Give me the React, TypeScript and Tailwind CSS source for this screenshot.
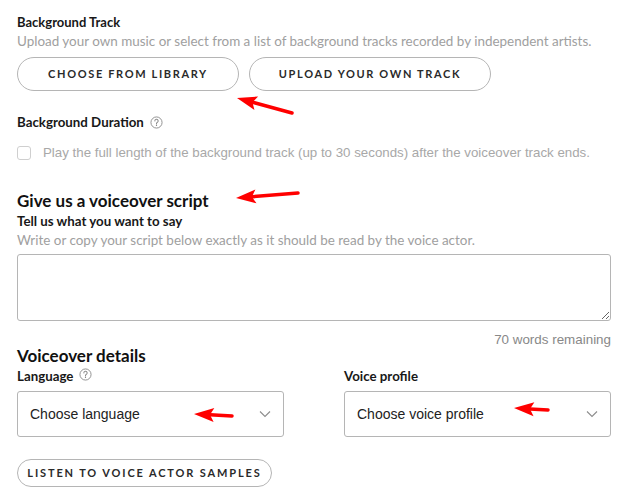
import React from "react";

const Help = ({ className = "" }: { className?: string }) => (
  <svg width="13" height="13" viewBox="0 0 14 14" className={className}>
    <circle cx="7" cy="7" r="6" fill="none" stroke="#8a8a8a" strokeWidth="1" />
    <path d="M5.2 5.4a1.8 1.8 0 1 1 2.5 1.6c-.5.3-.7.6-.7 1.2v.3" fill="none" stroke="#8a8a8a" strokeWidth="1.1" strokeLinecap="round" />
    <circle cx="7" cy="10.2" r="0.7" fill="#8a8a8a" />
  </svg>
);

const Chevron = () => (
  <svg width="12" height="8" viewBox="0 0 12 8">
    <path d="M1 1.5l5 5 5-5" fill="none" stroke="#8c8c8c" strokeWidth="1.1" />
  </svg>
);

const Arrow = ({ x1, y1, x2, y2 }: { x1: number; y1: number; x2: number; y2: number }) => {
  const dx = x2 - x1;
  const dy = y2 - y1;
  const len = Math.sqrt(dx * dx + dy * dy);
  const ux = dx / len;
  const uy = dy / len;
  const hl = 20;
  const hw = 7;
  const bx = x2 - ux * hl;
  const by = y2 - uy * hl;
  const px = -uy;
  const py = ux;
  return (
    <g>
      <line x1={x1} y1={y1} x2={bx + ux * 4} y2={by + uy * 4} stroke="#f00" strokeWidth="3.5" strokeLinecap="round" />
      <polygon
        points={`${x2},${y2} ${bx + px * hw},${by + py * hw} ${bx + ux * 4},${by + uy * 4} ${bx - px * hw},${by - py * hw}`}
        fill="#f00"
      />
    </g>
  );
};

const arial = { fontFamily: '"Liberation Sans", Arial, sans-serif' };

export default function App() {
  const sans = { fontFamily: '"Lato", "Noto Sans", sans-serif' };
  return (
    <div className="relative w-[636px] h-[495px] bg-white overflow-hidden" style={sans}>
      <div className="pl-[17px] pr-[25px] pt-[14px]">
        <div className="text-[13px] leading-[16px] font-bold text-[#181818]">Background Track</div>
        <div className="mt-[3px] text-[13.45px] leading-[16px] text-[#a0a0a0]">
          Upload your own music or select from a list of background tracks recorded by independent artists.
        </div>
        <div className="mt-[8px] flex gap-[10px]">
          <button className="w-[222px] h-[34px] rounded-full border border-[#b5b5b5] text-[11px] font-bold tracking-[0.15em] text-[#2a2a2a]">
            CHOOSE FROM LIBRARY
          </button>
          <button className="w-[242px] h-[34px] rounded-full border border-[#b5b5b5] text-[11px] font-bold tracking-[0.15em] text-[#2a2a2a]">
            UPLOAD YOUR OWN TRACK
          </button>
        </div>
        <div className="mt-[23px] flex items-center gap-[6px]">
          <span className="text-[13.3px] leading-[16px] font-bold text-[#181818]">Background Duration</span>
          <Help />
        </div>
        <div className="mt-[15px] flex items-center">
          <span className="w-[14px] h-[14px] rounded-[3px] border border-[#cfcfcf] bg-white" />
          <span className="ml-[12px] text-[13.3px] leading-[16px] text-[#a8a8a8]" style={arial}>
            Play the full length of the background track (up to 30 seconds) after the voiceover track ends.
          </span>
        </div>
        <div className="mt-[30px] text-[17px] leading-[20px] font-bold text-[#111]">Give us a voiceover script</div>
        <div className="mt-[2px] text-[13.3px] leading-[16px] font-bold text-[#181818]">Tell us what you want to say</div>
        <div className="mt-[3px] text-[13.45px] leading-[16px] text-[#a0a0a0]">
          Write or copy your script below exactly as it should be read by the voice actor.
        </div>
        <textarea className="mt-[6px] block w-[594px] h-[67px] rounded-[3px] border border-[#b5b5b5] resize-y" />
        <div className="mt-[11px] text-right text-[13.4px] leading-[16px] text-[#888]" style={arial}>
          70 words remaining
        </div>
        <div className="-mt-[2px] text-[17px] leading-[20px] font-bold text-[#111]">Voiceover details</div>
        <div className="mt-[2px] grid grid-cols-2 gap-[60px]">
          <div>
            <div className="flex items-center gap-[6px]">
              <span className="text-[13.3px] leading-[16px] font-bold text-[#181818]">Language</span>
              <Help className="-mt-[4px]" />
            </div>
            <div className="mt-[7px] h-[46px] rounded-[3px] border border-[#b5b5b5] flex items-center justify-between pl-[12px] pr-[12px]">
              <span className="text-[14px] text-[#222]" style={arial}>
                Choose language
              </span>
              <Chevron />
            </div>
          </div>
          <div>
            <div className="flex items-center">
              <span className="text-[13.3px] leading-[16px] font-bold text-[#181818]">Voice profile</span>
            </div>
            <div className="mt-[7px] h-[46px] rounded-[3px] border border-[#b5b5b5] flex items-center justify-between pl-[12px] pr-[12px]">
              <span className="text-[14px] text-[#222]" style={arial}>
                Choose voice profile
              </span>
              <Chevron />
            </div>
          </div>
        </div>
        <button className="mt-[22px] w-[255px] h-[28px] rounded-full border border-[#b5b5b5] text-[11px] font-bold tracking-[0.17em] text-[#2a2a2a]">
          LISTEN TO VOICE ACTOR SAMPLES
        </button>
      </div>
      <svg className="absolute inset-0 pointer-events-none" width="636" height="495">
        <Arrow x1={292} y1={113} x2={237} y2={98} />
        <Arrow x1={298} y1={193} x2={236} y2={198} />
        <Arrow x1={232} y1={416} x2={194} y2={414} />
        <Arrow x1={548} y1={410} x2={514} y2={408} />
      </svg>
    </div>
  );
}
